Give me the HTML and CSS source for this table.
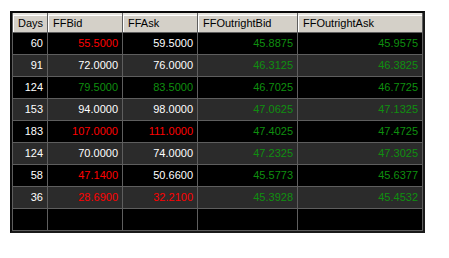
FILE: index.html
```html
<!DOCTYPE html>
<html>
<head>
<meta charset="utf-8">
<link rel="stylesheet" href="styles.css">
</head>
<body>
<div class="frame">
  <div class="grid">
    <div class="hd">Days</div>
    <div class="hd">FFBid</div>
    <div class="hd">FFAsk</div>
    <div class="hd">FFOutrightBid</div>
    <div class="hd">FFOutrightAsk</div>

    <div class="c">60</div><div class="c red">55.5000</div><div class="c">59.5000</div><div class="c grn">45.8875</div><div class="c grn">45.9575</div>
    <div class="c alt">91</div><div class="c alt">72.0000</div><div class="c alt">76.0000</div><div class="c alt grn">46.3125</div><div class="c alt grn">46.3825</div>
    <div class="c">124</div><div class="c grn">79.5000</div><div class="c grn">83.5000</div><div class="c grn">46.7025</div><div class="c grn">46.7725</div>
    <div class="c alt">153</div><div class="c alt">94.0000</div><div class="c alt">98.0000</div><div class="c alt grn">47.0625</div><div class="c alt grn">47.1325</div>
    <div class="c">183</div><div class="c red">107.0000</div><div class="c red">111.0000</div><div class="c grn">47.4025</div><div class="c grn">47.4725</div>
    <div class="c alt">124</div><div class="c alt">70.0000</div><div class="c alt">74.0000</div><div class="c alt grn">47.2325</div><div class="c alt grn">47.3025</div>
    <div class="c">58</div><div class="c red">47.1400</div><div class="c">50.6600</div><div class="c grn">45.5773</div><div class="c grn">45.6377</div>
    <div class="c alt">36</div><div class="c alt red">28.6900</div><div class="c alt red">32.2100</div><div class="c alt grn">45.3928</div><div class="c alt grn">45.4532</div>
    <div class="c"></div><div class="c"></div><div class="c"></div><div class="c"></div><div class="c"></div>
  </div>
</div>
</body>
</html>
```
FILE: styles.css
```css
html, body {
  margin: 0;
  padding: 0;
  background: #ffffff;
}
body {
  font-family: "Liberation Sans", Arial, sans-serif;
  font-size: 11px;
}
.frame {
  margin: 11px 0 0 10px;
  width: 411px;
  border: 2px solid #0a0a0a;
  border-right-color: #1a1a1a;
  border-bottom-color: #1a1a1a;
}
.grid {
  display: grid;
  grid-template-columns: 34px 74px 74px 99px 124px;
  grid-template-rows: 19px repeat(9, 21px);
  gap: 1px;
  padding: 0 1px 1px 1px;
  background: #5e5e5e;
}
.hd {
  background: #d4d0c8;
  color: #000;
  border-top: 2px solid #e4e2dc;
  box-shadow: inset 1px 1px 0 #ffffff;
  padding: 0 0 0 5px;
  line-height: 16px;
  white-space: nowrap;
  overflow: hidden;
}
.c {
  background: #000000;
  color: #ffffff;
  text-align: right;
  padding-right: 4px;
  line-height: 21px;
  white-space: nowrap;
}
.c.alt {
  background: #2b2b2b;
}
.red {
  color: #ff0000;
}
.grn {
  color: #0f8f0f;
}
```
